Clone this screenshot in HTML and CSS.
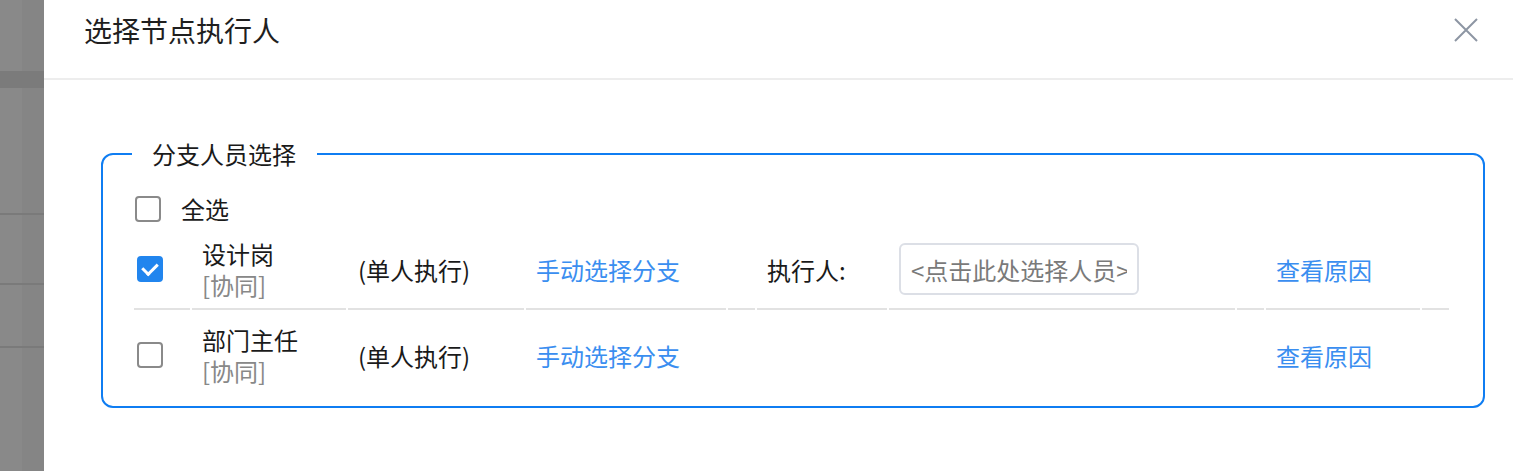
FILE: index.html
```html
<!DOCTYPE html>
<html lang="zh-CN">
<head>
  <meta charset="UTF-8" />
  <meta name="viewport" content="width=device-width, initial-scale=1.0" />
  <title>选择节点执行人</title>
  <link rel="stylesheet" href="styles.css">
</head>
<body>
  <div class="mask">
    <div class="mask-top"></div>
    <div class="mask-band"></div>
    <div class="mask-row r1"></div>
    <div class="mask-row r2"></div>
    <div class="mask-row r3"></div>
  </div>

  <div class="dialog">
    <div class="dialog-header">
      <span class="dialog-title">选择节点执行人</span>
      <button class="dialog-close" aria-label="关闭">
        <svg width="24" height="24" viewBox="0 0 24 24">
          <path d="M1 1 L23 23 M23 1 L1 23" stroke="#8d96a3" stroke-width="2" fill="none" />
        </svg>
      </button>
    </div>

    <div class="dialog-body">
      <fieldset class="branch-box">
        <legend>分支人员选择</legend>

        <label class="check-all">
          <input type="checkbox" class="chk">
          <span>全选</span>
        </label>

        <table class="branch-table">
          <colgroup>
            <col class="c-chk">
            <col class="c-name">
            <col class="c-mode">
            <col class="c-link">
            <col class="c-gap">
            <col class="c-label">
            <col class="c-input">
            <col class="c-gap">
            <col class="c-reason">
            <col class="c-gap">
          </colgroup>
          <tbody>
            <tr>
              <td class="td-chk"><input type="checkbox" class="chk" checked></td>
              <td>
                <div class="name">设计岗</div>
                <div class="name muted">[协同]</div>
              </td>
              <td>(单人执行)</td>
              <td><a href="#" class="link">手动选择分支</a></td>
              <td></td>
              <td>执行人:</td>
              <td><input type="text" class="pick-input" placeholder="<点击此处选择人员>" readonly></td>
              <td></td>
              <td><a href="#" class="link">查看原因</a></td>
              <td></td>
            </tr>
            <tr>
              <td class="td-chk"><input type="checkbox" class="chk"></td>
              <td>
                <div class="name">部门主任</div>
                <div class="name muted">[协同]</div>
              </td>
              <td>(单人执行)</td>
              <td><a href="#" class="link">手动选择分支</a></td>
              <td></td>
              <td></td>
              <td></td>
              <td></td>
              <td><a href="#" class="link">查看原因</a></td>
              <td></td>
            </tr>
          </tbody>
        </table>
      </fieldset>
    </div>
  </div>
</body>
</html>
```

FILE: styles.css
```css
* {
  box-sizing: border-box;
}

body {
  margin: 0;
  height: 471px;
  overflow: hidden;
  display: flex;
  font-family: "Noto Sans CJK SC", "Noto Sans", sans-serif;
  color: #1a1a1a;
  background-color: #fff;
}

/* fundo escurecido atrás do diálogo */
.mask {
  width: 44px;
  flex-shrink: 0;
  background: linear-gradient(to right, #898989 50%, #858585 50%);
}

.mask-top {
  height: 71px;
}

.mask-band {
  height: 17px;
  background-color: #7b7b7b;
}

.mask-row {
  border-bottom: 2px solid #7a7a7a;
}

.mask-row.r1 {
  height: 127px;
}

.mask-row.r2 {
  height: 70px;
}

.mask-row.r3 {
  height: 63px;
}

.dialog {
  flex: 1;
  background-color: #fff;
}

.dialog-header {
  height: 80px;
  padding: 15px 35px 0 40px;
  border-bottom: 2px solid #ededed;
  display: flex;
  justify-content: space-between;
  align-items: flex-start;
}

.dialog-title {
  font-size: 28px;
  line-height: 30px;
  color: #1f1f1f;
}

.dialog-close {
  margin-top: 3px;
  padding: 0;
  border: none;
  background: none;
  cursor: pointer;
  line-height: 0;
}

.dialog-body {
  padding: 58px 28px 0 57px;
}

.branch-box {
  margin: 0;
  padding: 24px 29px 6px 29px;
  border: 2px solid #0f7df2;
  border-radius: 12px;
  font-size: 24px;
  line-height: 31px;
}

.branch-box legend {
  padding: 0 21px 0 20px;
  font-size: 24px;
  line-height: 31px;
  color: #1a1a1a;
}

.check-all {
  display: flex;
  align-items: center;
  gap: 20px;
  padding-left: 3px;
  cursor: pointer;
}

.chk {
  appearance: none;
  -webkit-appearance: none;
  width: 26px;
  height: 26px;
  margin: 0;
  border: 2px solid #8a8a8a;
  border-radius: 4px;
  background-color: #fff;
  position: relative;
  cursor: pointer;
  flex-shrink: 0;
  display: block;
}

.chk:checked {
  background-color: #2185ee;
  border-color: #2185ee;
}

.chk:checked::after {
  content: "";
  position: absolute;
  left: 6px;
  top: 2px;
  width: 7px;
  height: 12px;
  border: solid #fff;
  border-width: 0 3px 3px 0;
  transform: rotate(45deg);
}

.branch-table {
  margin-top: 6px;
  width: 1318px;
  table-layout: fixed;
  border-collapse: separate;
  border-spacing: 2px 0;
}

.c-chk { width: 56px; }
.c-name { width: 154px; }
.c-mode { width: 176px; }
.c-link { width: 200px; }
.c-gap { width: 27px; }
.c-label { width: 130px; }
.c-input { width: 346px; }
.c-reason { width: 154px; }

.branch-table td {
  padding: 8px 10px;
  vertical-align: middle;
  white-space: nowrap;
}

.branch-table tr:first-child td {
  border-bottom: 2px solid #e2e2e2;
}

.branch-table tr:last-child td {
  padding-top: 14px;
  padding-bottom: 14px;
}

.branch-table td.td-chk {
  padding-left: 3px;
  padding-right: 0;
}

.name {
  height: 31px;
}

.muted {
  color: #888;
}

.link {
  color: #3a8ef0;
  text-decoration: none;
}

.pick-input {
  display: block;
  width: 240px;
  height: 52px;
  padding: 0 10px;
  border: 2px solid #dcdfe6;
  border-radius: 6px;
  font-family: inherit;
  font-size: 24px;
  color: #555;
  background-color: #fff;
  outline: none;
  cursor: pointer;
}

.pick-input::placeholder {
  color: #7a7a7a;
}
```
